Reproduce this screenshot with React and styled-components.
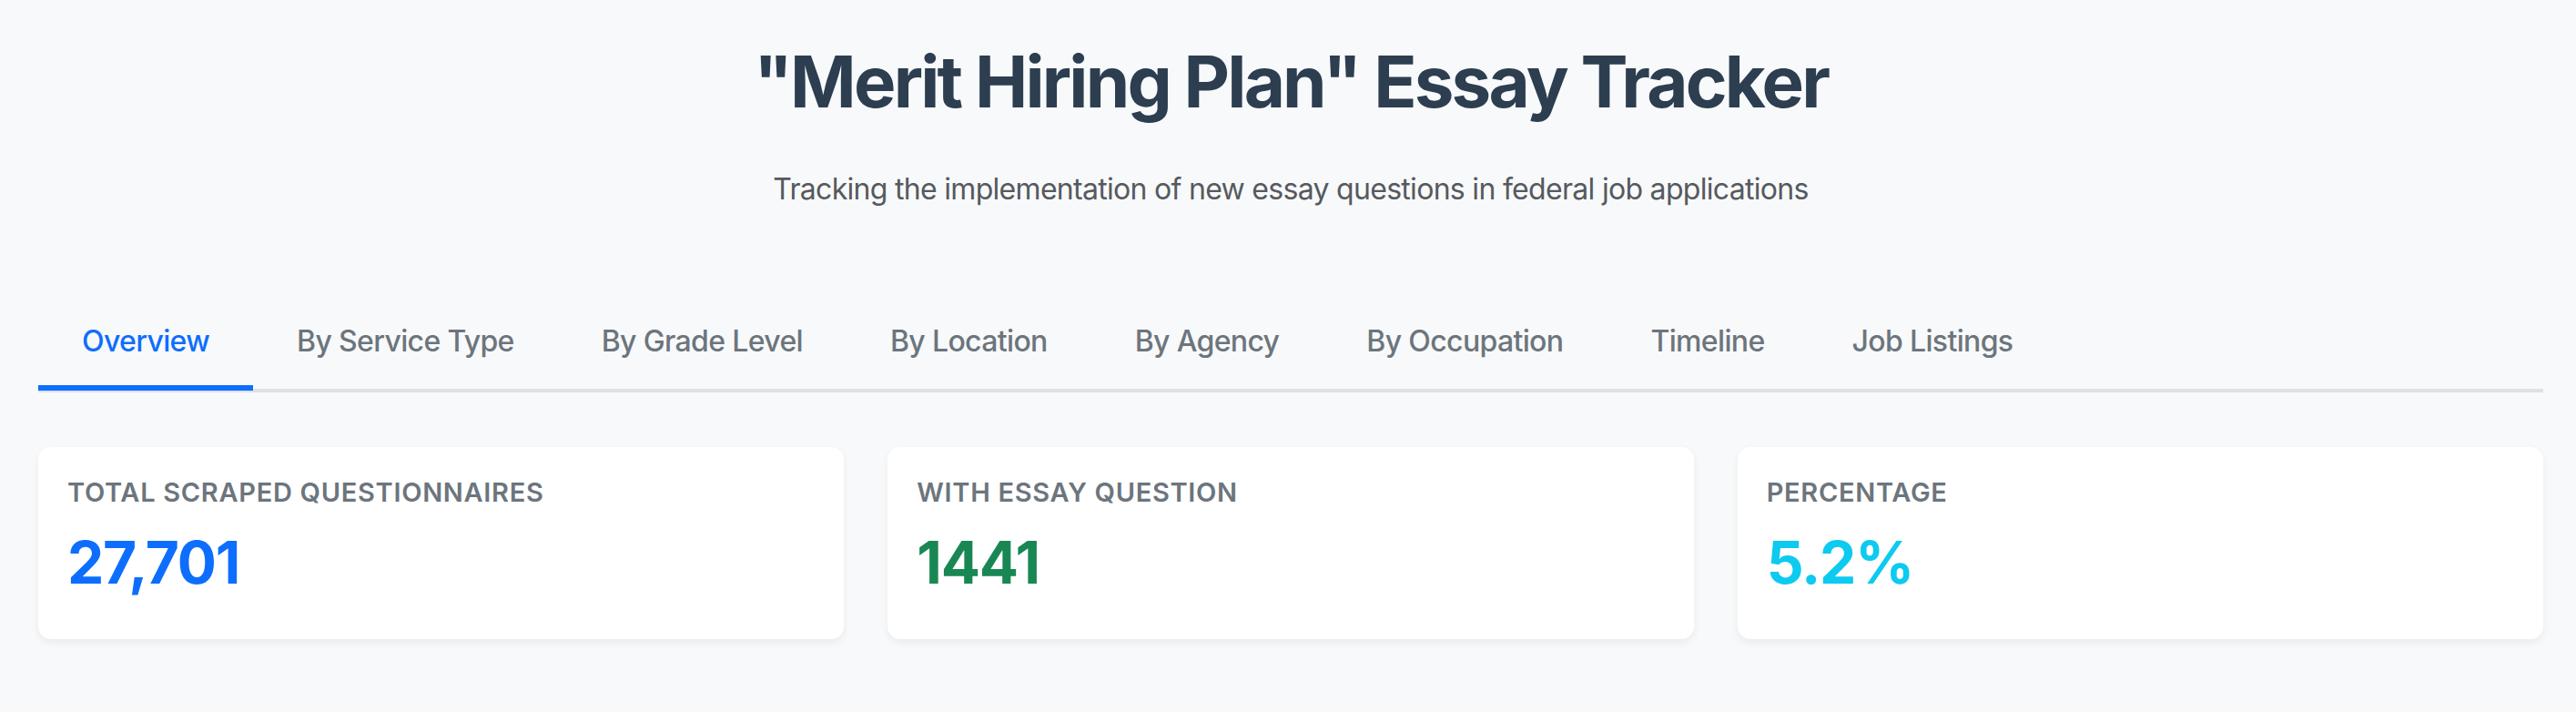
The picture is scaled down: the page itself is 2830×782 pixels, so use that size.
import React from "react";
import styled, { createGlobalStyle } from "styled-components";

const GlobalStyle = createGlobalStyle`
  html, body {
    margin: 0;
    padding: 0;
    background: #f8f9fa;
  }
  body {
    font-family: Inter, "Noto Sans", "Liberation Sans", sans-serif;
    color: #212529;
  }
`;

const Page = styled.div`
  min-height: 782px;
  padding: 43px 36px 0 42px;
  box-sizing: border-box;
`;

const Header = styled.header`
  text-align: center;
`;

const Title = styled.h1`
  margin: 0;
  font-size: 78px;
  line-height: 94px;
  font-weight: 700;
  color: #2c3e50;
  letter-spacing: -2.8px;
`;

const Subtitle = styled.p`
  margin: 47px 0 0;
  font-size: 32px;
  line-height: 48px;
  color: #555a60;
  letter-spacing: -0.7px;
`;

const Tabs = styled.nav`
  display: flex;
  margin-top: 95px;
  border-bottom: 4px solid #dee2e6;
`;

const Tab = styled.a`
  display: block;
  padding: 24px 48px;
  margin-bottom: -2px;
  font-size: 32px;
  line-height: 48px;
  font-weight: 500;
  letter-spacing: -0.65px;
  text-decoration: none;
  cursor: pointer;
  color: ${({ $active }) => ($active ? "#0d6efd" : "#6c757d")};
  border-bottom: 6px solid ${({ $active }) => ($active ? "#0d6efd" : "transparent")};
`;

const Stats = styled.section`
  display: grid;
  grid-template-columns: repeat(3, 1fr);
  gap: 48px;
  margin-top: 60px;
`;

const Card = styled.div`
  background: #fff;
  border-radius: 14px;
  padding: 32px 32px 46px;
  box-shadow: 0 4px 10px rgba(0, 0, 0, 0.06);
`;

const Label = styled.div`
  font-size: 29px;
  line-height: 35px;
  font-weight: 600;
  letter-spacing: 0.7px;
  text-transform: uppercase;
  color: #6c757d;
`;

const Value = styled.div`
  margin-top: 21px;
  font-size: 64px;
  line-height: 77px;
  font-weight: 700;
  letter-spacing: -1.2px;
  color: ${({ $color }) => $color};
`;

const tabs = [
  "Overview",
  "By Service Type",
  "By Grade Level",
  "By Location",
  "By Agency",
  "By Occupation",
  "Timeline",
  "Job Listings",
];

const stats = [
  { label: "Total Scraped Questionnaires", value: "27,701", color: "#0d6efd" },
  { label: "With Essay Question", value: "1441", color: "#198754" },
  { label: "Percentage", value: "5.2%", color: "#0dcaf0" },
];

export default function App() {
  return (
    <>
      <GlobalStyle />
      <Page>
        <Header>
          <Title>"Merit Hiring Plan" Essay Tracker</Title>
          <Subtitle>
            Tracking the implementation of new essay questions in federal job applications
          </Subtitle>
        </Header>
        <Tabs>
          {tabs.map((t, i) => (
            <Tab key={t} $active={i === 0}>
              {t}
            </Tab>
          ))}
        </Tabs>
        <Stats>
          {stats.map((s) => (
            <Card key={s.label}>
              <Label>{s.label}</Label>
              <Value $color={s.color}>{s.value}</Value>
            </Card>
          ))}
        </Stats>
      </Page>
    </>
  );
}
